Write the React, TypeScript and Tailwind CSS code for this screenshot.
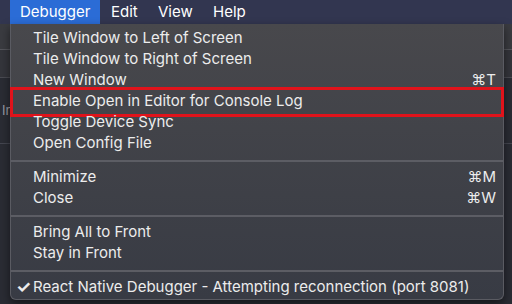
import React from "react";

type Item = { label: string; shortcut?: string; highlight?: boolean; checked?: boolean } | "sep";

const items: Item[] = [
  { label: "Tile Window to Left of Screen" },
  { label: "Tile Window to Right of Screen" },
  { label: "New Window", shortcut: "⌘T" },
  { label: "Enable Open in Editor for Console Log", highlight: true },
  { label: "Toggle Device Sync" },
  { label: "Open Config File" },
  "sep",
  { label: "Minimize", shortcut: "⌘M" },
  { label: "Close", shortcut: "⌘W" },
  "sep",
  { label: "Bring All to Front" },
  { label: "Stay in Front" },
  "sep",
  { label: "React Native Debugger - Attempting reconnection (port 8081)", checked: true },
];

export default function App() {
  return (
    <div
      className="relative w-[512px] h-[304px] overflow-hidden bg-[#2a2c34] text-[#ececec]"
      style={{ fontFamily: 'Inter, "Liberation Sans", Arial, sans-serif' }}
    >
      {/* menu bar */}
      <div className="flex h-[24px] bg-[#323650] text-[15px] text-white items-stretch">
        <div className="w-[10px]" />
        <div className="flex items-center bg-[#2b6cd6] w-[90px] pl-[10px]">Debugger</div>
        <div className="flex items-center pl-[11px] w-[47px]">Edit</div>
        <div className="flex items-center pl-[11px] w-[55px]">View</div>
        <div className="flex items-center pl-[11px]">Help</div>
      </div>

      {/* background window behind */}
      <div className="flex flex-col">
        <div className="h-[26px] bg-[#3a3b40] border-b border-[#55565c]" />
        <div className="h-[28px] bg-[#34353b] border-b border-[#4a4b52]" />
        <div className="h-[66px] flex items-center text-[13px] text-[#9a9ca4] pl-[2px] border-b border-[#444650]">In</div>
        <div className="flex-1" />
      </div>

      {/* dropdown menu */}
      <div className="absolute left-[10px] top-[24px] w-[494px] h-[276px] rounded-b-[6px] border border-t-0 border-[#5a5b62] bg-gradient-to-b from-[#48484c] to-[#383b44] shadow-[0_4px_10px_rgba(0,0,0,0.5)] pt-[4px] text-[15px]">
        {items.map((it, i) =>
          it === "sep" ? (
            <div key={i} className="h-[13px] flex items-center">
              <div className="w-full h-[2px] bg-[#5c5d64]" />
            </div>
          ) : (
            <div
              key={i}
              className={
                it.highlight
                  ? "relative h-[21px] flex items-center pl-[22px] pr-[7px]"
                  : "relative h-[21px] flex items-center pl-[22px] pr-[7px]"
              }
            >
              {it.checked && <span className="absolute left-[5px] text-[17px] font-bold">✓</span>}
              <span className="flex-1 whitespace-nowrap">{it.label}</span>
              {it.shortcut && <span className="whitespace-nowrap">{it.shortcut}</span>}
              {it.highlight && (
                <div className="absolute left-[-1px] right-[-1px] top-[-4px] bottom-[-5px] border-[3px] border-[#e0131b]" />
              )}
            </div>
          )
        )}
      </div>
    </div>
  );
}
